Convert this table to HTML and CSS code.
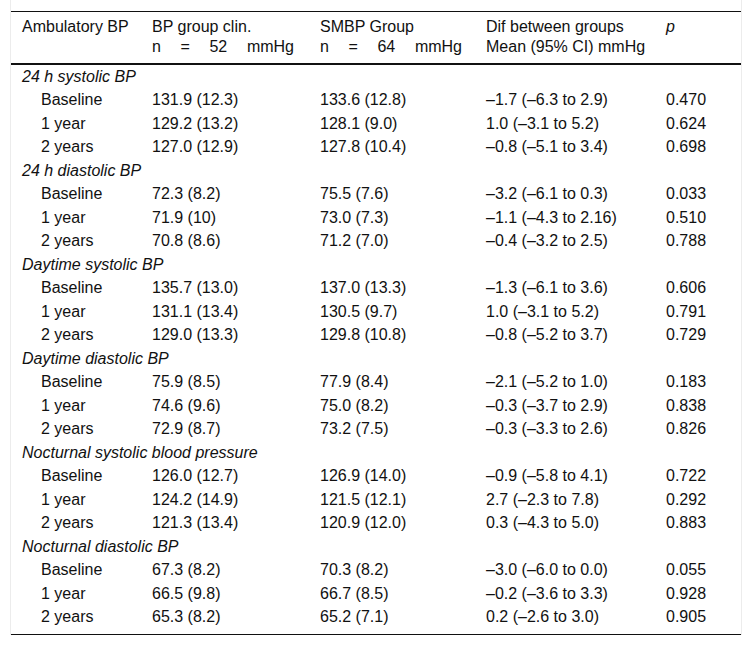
FILE: index.html
```html
<!DOCTYPE html>
<html>
<head>
<meta charset="utf-8">
<link rel="stylesheet" href="styles.css">
</head>
<body>
<div class="frame">
<div class="tbl">
<div class="row head">
<div class="cell">Ambulatory BP</div>
<div class="cell"><div>BP group clin.</div><div class="spread"><span>n</span><span>=</span><span>52</span><span>mmHg</span></div></div>
<div class="cell"><div>SMBP Group</div><div class="spread"><span>n</span><span>=</span><span>64</span><span>mmHg</span></div></div>
<div class="cell"><div>Dif between groups</div><div>Mean (95% CI) mmHg</div></div>
<div class="cell"><i>p</i></div>
</div>
<div class="body">
<div class="row grp"><div class="cell">24 h systolic BP</div></div>
<div class="row"><div class="cell sub">Baseline</div><div class="cell">131.9 (12.3)</div><div class="cell">133.6 (12.8)</div><div class="cell">–1.7 (–6.3 to 2.9)</div><div class="cell">0.470</div></div>
<div class="row"><div class="cell sub">1 year</div><div class="cell">129.2 (13.2)</div><div class="cell">128.1 (9.0)</div><div class="cell">1.0 (–3.1 to 5.2)</div><div class="cell">0.624</div></div>
<div class="row"><div class="cell sub">2 years</div><div class="cell">127.0 (12.9)</div><div class="cell">127.8 (10.4)</div><div class="cell">–0.8 (–5.1 to 3.4)</div><div class="cell">0.698</div></div>
<div class="row grp"><div class="cell">24 h diastolic BP</div></div>
<div class="row"><div class="cell sub">Baseline</div><div class="cell">72.3 (8.2)</div><div class="cell">75.5 (7.6)</div><div class="cell">–3.2 (–6.1 to 0.3)</div><div class="cell">0.033</div></div>
<div class="row"><div class="cell sub">1 year</div><div class="cell">71.9 (10)</div><div class="cell">73.0 (7.3)</div><div class="cell">–1.1 (–4.3 to 2.16)</div><div class="cell">0.510</div></div>
<div class="row"><div class="cell sub">2 years</div><div class="cell">70.8 (8.6)</div><div class="cell">71.2 (7.0)</div><div class="cell">–0.4 (–3.2 to 2.5)</div><div class="cell">0.788</div></div>
<div class="row grp"><div class="cell">Daytime systolic BP</div></div>
<div class="row"><div class="cell sub">Baseline</div><div class="cell">135.7 (13.0)</div><div class="cell">137.0 (13.3)</div><div class="cell">–1.3 (–6.1 to 3.6)</div><div class="cell">0.606</div></div>
<div class="row"><div class="cell sub">1 year</div><div class="cell">131.1 (13.4)</div><div class="cell">130.5 (9.7)</div><div class="cell">1.0 (–3.1 to 5.2)</div><div class="cell">0.791</div></div>
<div class="row"><div class="cell sub">2 years</div><div class="cell">129.0 (13.3)</div><div class="cell">129.8 (10.8)</div><div class="cell">–0.8 (–5.2 to 3.7)</div><div class="cell">0.729</div></div>
<div class="row grp"><div class="cell">Daytime diastolic BP</div></div>
<div class="row"><div class="cell sub">Baseline</div><div class="cell">75.9 (8.5)</div><div class="cell">77.9 (8.4)</div><div class="cell">–2.1 (–5.2 to 1.0)</div><div class="cell">0.183</div></div>
<div class="row"><div class="cell sub">1 year</div><div class="cell">74.6 (9.6)</div><div class="cell">75.0 (8.2)</div><div class="cell">–0.3 (–3.7 to 2.9)</div><div class="cell">0.838</div></div>
<div class="row"><div class="cell sub">2 years</div><div class="cell">72.9 (8.7)</div><div class="cell">73.2 (7.5)</div><div class="cell">–0.3 (–3.3 to 2.6)</div><div class="cell">0.826</div></div>
<div class="row grp"><div class="cell">Nocturnal systolic blood pressure</div></div>
<div class="row"><div class="cell sub">Baseline</div><div class="cell">126.0 (12.7)</div><div class="cell">126.9 (14.0)</div><div class="cell">–0.9 (–5.8 to 4.1)</div><div class="cell">0.722</div></div>
<div class="row"><div class="cell sub">1 year</div><div class="cell">124.2 (14.9)</div><div class="cell">121.5 (12.1)</div><div class="cell">2.7 (–2.3 to 7.8)</div><div class="cell">0.292</div></div>
<div class="row"><div class="cell sub">2 years</div><div class="cell">121.3 (13.4)</div><div class="cell">120.9 (12.0)</div><div class="cell">0.3 (–4.3 to 5.0)</div><div class="cell">0.883</div></div>
<div class="row grp"><div class="cell">Nocturnal diastolic BP</div></div>
<div class="row"><div class="cell sub">Baseline</div><div class="cell">67.3 (8.2)</div><div class="cell">70.3 (8.2)</div><div class="cell">–3.0 (–6.0 to 0.0)</div><div class="cell">0.055</div></div>
<div class="row"><div class="cell sub">1 year</div><div class="cell">66.5 (9.8)</div><div class="cell">66.7 (8.5)</div><div class="cell">–0.2 (–3.6 to 3.3)</div><div class="cell">0.928</div></div>
<div class="row"><div class="cell sub">2 years</div><div class="cell">65.3 (8.2)</div><div class="cell">65.2 (7.1)</div><div class="cell">0.2 (–2.6 to 3.0)</div><div class="cell">0.905</div></div>
</div>
</div>
</div>
</body>
</html>
```
FILE: styles.css
```css
html, body {
  margin: 0;
  padding: 0;
  background: #fff;
}
body {
  font-family: "Liberation Sans", Arial, sans-serif;
  font-size: 16px;
  color: #111;
}
.frame {
  margin: 0 10px;
  width: 730px;
  padding-top: 11px;
  border-left: 1px solid #ececec;
  border-right: 1px solid #ececec;
}
.tbl {
  width: 730px;
  border-top: 1px solid #111;
  border-bottom: 1px solid #111;
}
.row {
  display: grid;
  grid-template-columns: 130px 168px 166px 180px 86px;
}
.cell {
  padding-left: 11px;
  white-space: nowrap;
}
.head {
  line-height: 20px;
  padding: 5px 0 6px;
  border-bottom: 2px solid #111;
}
.spread {
  display: flex;
  justify-content: space-between;
  width: 142px;
}
.body {
  padding-bottom: 5px;
}
.body .row {
  line-height: 18.5px;
  padding: 2.5px 0;
}
.cell.sub {
  padding-left: 30px;
}
.grp .cell {
  grid-column: 1 / -1;
  font-style: italic;
}
```
